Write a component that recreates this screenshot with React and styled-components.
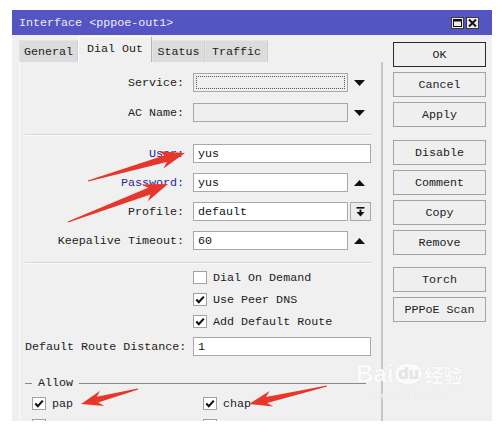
import React from "react";
import styled, { createGlobalStyle } from "styled-components";

const GlobalStyle = createGlobalStyle`
  html, body { margin: 0; padding: 0; background: #ffffff; }
  body { font-family: "Liberation Mono", "DejaVu Sans Mono", monospace; }
  * { box-sizing: border-box; }
`;

const MONO = `"Liberation Mono", "DejaVu Sans Mono", monospace`;

const Page = styled.div`
  position: relative;
  width: 503px;
  height: 433px;
  padding: 10px 0 0 12px;
  overflow: hidden;
`;

const Window = styled.div`
  width: 480px;
  height: 411px;
  background: #f0f0f0;
  display: flex;
  flex-direction: column;
  overflow: hidden;
  font-family: ${MONO};
  font-size: 11.7px;
  color: #1c1c1c;
`;

const TitleBar = styled.div`
  height: 25px;
  flex: none;
  background: #5454c2;
  display: flex;
  align-items: center;
  justify-content: space-between;
  padding: 0 13px 0 7px;
`;

const Title = styled.span`
  color: #eeeefa;
  font-size: 11.7px;
`;

const TitleButtons = styled.div`
  display: flex;
  gap: 2px;
`;

const TitleBtn = styled.div`
  width: 13px;
  height: 12px;
  background: #ececec;
  border: 1px solid #3a3a3a;
  display: flex;
  align-items: center;
  justify-content: center;
`;

const Body = styled.div`
  flex: 1;
  display: flex;
  min-height: 0;
`;

const Main = styled.div`
  width: 371px;
  flex: none;
  display: flex;
  flex-direction: column;
`;

const TabStrip = styled.div`
  height: 27px;
  flex: none;
  display: flex;
  align-items: flex-end;
  padding-left: 7px;
`;

const Tab = styled.div`
  width: ${(p) => p.$w}px;
  height: ${(p) => (p.$active ? 26 : 22)}px;
  background: ${(p) => (p.$active ? "#f0f0f0" : "#dcdcdc")};
  border-left: 1px solid ${(p) => (p.$active ? "#ffffff" : "#e6e6e6")};
  border-right: 1px solid ${(p) => (p.$active ? "#b4b4b4" : "#cfcfcf")};
  border-top: 1px solid ${(p) => (p.$active ? "#ffffff" : "#e4e4e4")};
  display: flex;
  align-items: ${(p) => (p.$active ? "flex-start" : "center")};
  padding-top: ${(p) => (p.$active ? 5 : 0)}px;
  justify-content: center;
  color: #1c1c1c;
`;

const Panel = styled.div`
  flex: 1;
  margin-left: 7px;
  border-right: 2px solid #c6c6c6;
  border-left: 1px solid #fafafa;
  padding: 11px 10px 0 5px;
  display: flex;
  flex-direction: column;
`;

const Row = styled.div`
  display: grid;
  grid-template-columns: 159px 178px;
  column-gap: 9px;
  align-items: center;
  height: 19px;
  margin-top: ${(p) => p.$mt || 0}px;
  flex: none;
`;

const Label = styled.label`
  text-align: right;
  white-space: nowrap;
  color: ${(p) => (p.$blue ? "#28289a" : "#1c1c1c")};
`;

const Field = styled.div`
  display: flex;
  align-items: center;
  height: 19px;
`;

const Input = styled.div`
  width: ${(p) => (p.$short ? "155px" : "178px")};
  height: 19px;
  flex: none;
  border: 1px solid #a8a8a8;
  background: ${(p) => (p.$muted ? "#efefef" : "#ffffff")};
  padding: ${(p) => (p.$focus ? "2px" : "0 4px")};
  display: flex;
  align-items: center;
  white-space: nowrap;
  color: #111;
`;

const FocusRing = styled.div`
  width: 100%;
  height: 100%;
  border: 1px dotted #555;
`;

const ArrowSlot = styled.div`
  width: 23px;
  height: 19px;
  display: flex;
  align-items: center;
  justify-content: center;
`;

const DropButton = styled.div`
  width: 21px;
  height: 19px;
  margin-left: 2px;
  border: 1px solid #a8a8a8;
  background: #ececec;
  display: flex;
  align-items: center;
  justify-content: center;
`;

const Separator = styled.div`
  height: 2px;
  flex: none;
  margin-top: ${(p) => p.$mt || 0}px;
  border-top: 1px solid #d6d6d6;
  border-bottom: 1px solid #fbfbfb;
`;

const CheckLine = styled.div`
  display: flex;
  align-items: center;
  gap: 6px;
  white-space: nowrap;
`;

const Box = styled.div`
  width: 14px;
  height: 13px;
  flex: none;
  background: #ffffff;
  border: 1px solid #a2a2a2;
  display: flex;
  align-items: center;
  justify-content: center;
`;

const GroupHead = styled.div`
  display: flex;
  align-items: center;
  height: 14px;
  margin-top: ${(p) => p.$mt || 0}px;
  margin-right: 5px;
  flex: none;
`;

const Dash = styled.div`
  width: 7px;
  height: 1px;
  background: #8a8a8a;
`;

const GroupTitle = styled.span`
  margin: 0 6px;
`;

const GroupLine = styled.div`
  flex: 1;
  height: 1px;
  background: #8a8a8a;
`;

const CheckGrid = styled.div`
  display: grid;
  grid-template-columns: 171px 1fr;
  padding-left: 7px;
  height: 19px;
  align-items: center;
  margin-top: ${(p) => p.$mt || 0}px;
  flex: none;
`;

const ButtonColumn = styled.div`
  width: 93px;
  margin-left: 10px;
  padding-top: 7px;
  display: flex;
  flex-direction: column;
  gap: 5px;
`;

const Button = styled.div`
  height: 25px;
  flex: none;
  margin-top: ${(p) => p.$mt || 0}px;
  border: 1px solid ${(p) => (p.$default ? "#2a2a2a" : "#a4a4a4")};
  background: #efefef;
  display: flex;
  align-items: center;
  justify-content: center;
  color: #1c1c1c;
  white-space: nowrap;
`;

const Overlay = styled.svg`
  position: absolute;
  left: 0;
  top: 0;
  pointer-events: none;
`;

const Watermark = styled.div`
  position: absolute;
  left: 356px;
  top: 360px;
  display: flex;
  flex-direction: column;
  align-items: center;
  pointer-events: none;
`;

const WmTop = styled.div`
  display: flex;
  align-items: center;
  gap: 2px;
  font-family: "Liberation Sans", Arial, sans-serif;
  font-weight: 700;
  font-size: 24px;
  color: #fbfbfb;
  text-shadow: 0 0 1px #d6d6d6;
`;

const WmDu = styled.span`
  background: #fbfbfb;
  color: #e6e6e6;
  border-radius: 10px;
  font-size: 17px;
  padding: 0 3px;
  box-shadow: 0 0 1px #d6d6d6;
`;

const WmCn = styled.span`
  font-family: "Noto Sans CJK SC", sans-serif;
  font-size: 19px;
  font-weight: 700;
`;

const WmSub = styled.div`
  font-family: "Liberation Sans", Arial, sans-serif;
  font-size: 9px;
  color: #fafafa;
  text-shadow: 0 0 1px #d6d6d6;
  margin-top: 2px;
`;

const Down = () => (
  <svg width="11" height="6" viewBox="0 0 11 6">
    <polygon points="0,0 11,0 5.5,6" fill="#111" />
  </svg>
);
const Up = () => (
  <svg width="11" height="6" viewBox="0 0 11 6">
    <polygon points="0,6 11,6 5.5,0" fill="#111" />
  </svg>
);
const DropIcon = () => (
  <svg width="9" height="10" viewBox="0 0 9 10">
    <rect x="0.5" y="0" width="8" height="1.6" fill="#111" />
    <rect x="3.5" y="2.6" width="2" height="3" fill="#111" />
    <polygon points="0.5,5 8.5,5 4.5,9.5" fill="#111" />
  </svg>
);
const Tick = () => (
  <svg width="10" height="9" viewBox="0 0 10 9">
    <path d="M1.3 4.6 L3.8 7.2 L8.8 1.6" stroke="#111" strokeWidth="2.1" fill="none" />
  </svg>
);

const Check = ({ checked, children }) => (
  <CheckLine>
    <Box>{checked && <Tick />}</Box>
    {children && <span>{children}</span>}
  </CheckLine>
);

function arrowPoints(x1, y1, x2, y2, head, wing, tailW, neckW) {
  const dx = x2 - x1;
  const dy = y2 - y1;
  const len = Math.hypot(dx, dy);
  const ux = dx / len;
  const uy = dy / len;
  const nx = -uy;
  const ny = ux;
  const bx = x2 - ux * head;
  const by = y2 - uy * head;
  const wx = x2 - ux * (head + 5);
  const wy = y2 - uy * (head + 5);
  const pts = [
    [x1 + nx * tailW, y1 + ny * tailW],
    [bx + nx * neckW, by + ny * neckW],
    [wx + nx * wing, wy + ny * wing],
    [x2, y2],
    [wx - nx * wing, wy - ny * wing],
    [bx - nx * neckW, by - ny * neckW],
    [x1 - nx * tailW, y1 - ny * tailW],
  ];
  return pts.map((p) => p.map((v) => v.toFixed(1)).join(",")).join(" ");
}

const arrows = [
  [88, 181, 185, 153, 20, 9, 0.6, 3.5],
  [68, 222, 168, 184, 20, 9, 0.6, 3.5],
  [138, 389, 81, 404, 17, 8, 0.6, 3],
  [327, 386, 249, 404, 18, 8, 0.6, 3],
];

export default function App() {
  return (
    <>
      <GlobalStyle />
      <Page>
        <Window>
          <TitleBar>
            <Title>Interface &lt;pppoe-out1&gt;</Title>
            <TitleButtons>
              <TitleBtn>
                <svg width="9" height="8" viewBox="0 0 9 8">
                  <rect x="0.5" y="0.5" width="8" height="7" fill="none" stroke="#111" />
                  <rect x="0.5" y="0.5" width="8" height="2" fill="#111" />
                </svg>
              </TitleBtn>
              <TitleBtn>
                <svg width="9" height="8" viewBox="0 0 9 8">
                  <path d="M1 0.5 L8 7.5 M8 0.5 L1 7.5" stroke="#111" strokeWidth="2" />
                </svg>
              </TitleBtn>
            </TitleButtons>
          </TitleBar>
          <Body>
            <Main>
              <TabStrip>
                <Tab $w={59}>General</Tab>
                <Tab $w={74} $active>Dial Out</Tab>
                <Tab $w={53}>Status</Tab>
                <Tab $w={63}>Traffic</Tab>
              </TabStrip>
              <Panel>
                <Row>
                  <Label>Service:</Label>
                  <Field>
                    <Input $short $muted $focus>
                      <FocusRing />
                    </Input>
                    <ArrowSlot><Down /></ArrowSlot>
                  </Field>
                </Row>
                <Row $mt={11}>
                  <Label>AC Name:</Label>
                  <Field>
                    <Input $short $muted />
                    <ArrowSlot><Down /></ArrowSlot>
                  </Field>
                </Row>
                <Separator $mt={12} />
                <Row $mt={8}>
                  <Label $blue>User:</Label>
                  <Field>
                    <Input>yus</Input>
                  </Field>
                </Row>
                <Row $mt={10}>
                  <Label $blue>Password:</Label>
                  <Field>
                    <Input $short>yus</Input>
                    <ArrowSlot><Up /></ArrowSlot>
                  </Field>
                </Row>
                <Row $mt={10}>
                  <Label>Profile:</Label>
                  <Field>
                    <Input $short>default</Input>
                    <DropButton><DropIcon /></DropButton>
                  </Field>
                </Row>
                <Row $mt={10}>
                  <Label>Keepalive Timeout:</Label>
                  <Field>
                    <Input $short>60</Input>
                    <ArrowSlot><Up /></ArrowSlot>
                  </Field>
                </Row>
                <Separator $mt={12} />
                <Row $mt={4}>
                  <span />
                  <Check>Dial On Demand</Check>
                </Row>
                <Row $mt={3}>
                  <span />
                  <Check checked>Use Peer DNS</Check>
                </Row>
                <Row $mt={3}>
                  <span />
                  <Check checked>Add Default Route</Check>
                </Row>
                <Row $mt={6}>
                  <Label>Default Route Distance:</Label>
                  <Field>
                    <Input>1</Input>
                  </Field>
                </Row>
                <GroupHead $mt={20}>
                  <Dash />
                  <GroupTitle>Allow</GroupTitle>
                  <GroupLine />
                </GroupHead>
                <CheckGrid $mt={4}>
                  <Check checked>pap</Check>
                  <Check checked>chap</Check>
                </CheckGrid>
                <CheckGrid $mt={3}>
                  <Check checked />
                  <Check checked />
                </CheckGrid>
              </Panel>
            </Main>
            <ButtonColumn>
              <Button $default>OK</Button>
              <Button>Cancel</Button>
              <Button>Apply</Button>
              <Button $mt={8}>Disable</Button>
              <Button>Comment</Button>
              <Button>Copy</Button>
              <Button>Remove</Button>
              <Button $mt={7}>Torch</Button>
              <Button>PPPoE Scan</Button>
            </ButtonColumn>
          </Body>
        </Window>
        <Watermark>
          <WmTop>
            <span>Bai</span>
            <WmDu>du</WmDu>
            <WmCn>经验</WmCn>
          </WmTop>
          <WmSub>jingyan.baidu.com</WmSub>
        </Watermark>
        <Overlay width="503" height="433" viewBox="0 0 503 433">
          {arrows.map((a, i) => (
            <polygon key={i} points={arrowPoints(...a)} fill="#e8362b" />
          ))}
        </Overlay>
      </Page>
    </>
  );
}
